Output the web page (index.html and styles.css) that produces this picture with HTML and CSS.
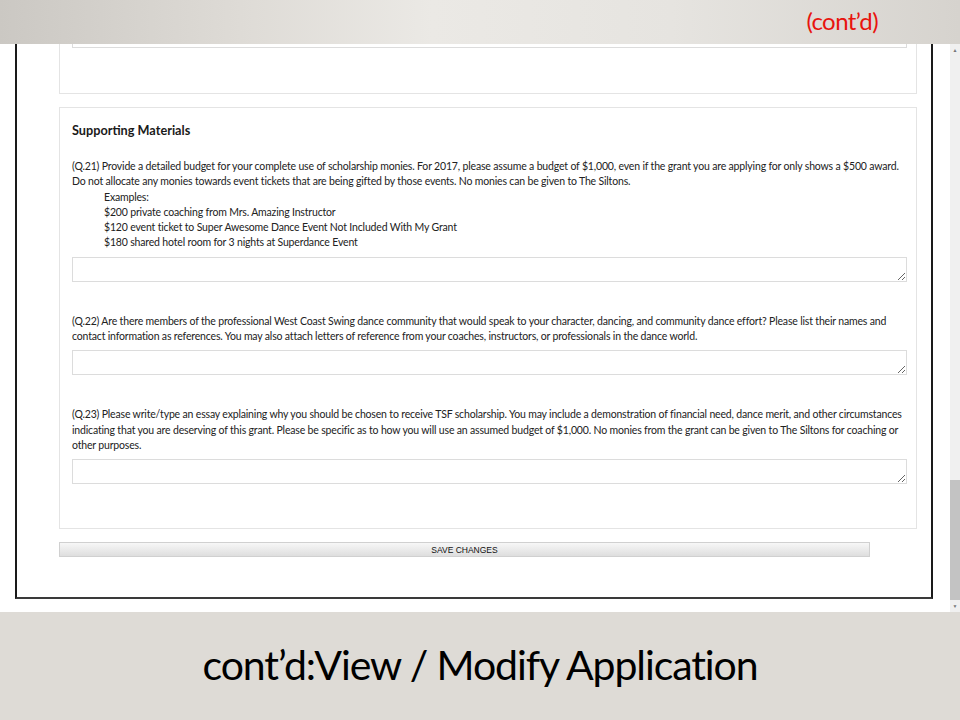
FILE: index.html
```html
<!DOCTYPE html>
<html>
<head>
<meta charset="utf-8">
<link rel="stylesheet" href="styles.css">
</head>
<body>
<div class="slide">
  <header class="topbar">
    <span class="contd">(cont’d)</span>
  </header>
  <section class="shot">
    <div class="window">
      <div class="card prev-card">
        <div class="ta-stub"></div>
      </div>
      <div class="card main-card">
        <h3 class="card-title">Supporting Materials</h3>
        <p class="q">(Q.21) Provide a detailed budget for your complete use of scholarship monies. For 2017, please assume a budget of $1,000, even if the grant you are applying for only shows a $500 award. Do not allocate any monies towards event tickets that are being gifted by those events. No monies can be given to The Siltons.</p>
        <div class="examples">
          <div>Examples:</div>
          <div>$200 private coaching from Mrs. Amazing Instructor</div>
          <div>$120 event ticket to Super Awesome Dance Event Not Included With My Grant</div>
          <div>$180 shared hotel room for 3 nights at Superdance Event</div>
        </div>
        <textarea class="ta"></textarea>
        <p class="q q-gap">(Q.22) Are there members of the professional West Coast Swing dance community that would speak to your character, dancing, and community dance effort? Please list their names and contact information as references. You may also attach letters of reference from your coaches, instructors, or professionals in the dance world.</p>
        <textarea class="ta"></textarea>
        <p class="q q-gap">(Q.23) Please write/type an essay explaining why you should be chosen to receive TSF scholarship. You may include a demonstration of financial need, dance merit, and other circumstances indicating that you are deserving of this grant. Please be specific as to how you will use an assumed budget of $1,000. No monies from the grant can be given to The Siltons for coaching or other purposes.</p>
        <textarea class="ta"></textarea>
      </div>
      <button class="save">SAVE CHANGES</button>
    </div>
    <div class="scrollbar">
      <span class="arrow up">▲</span>
      <div class="track"><div class="thumb"></div></div>
      <span class="arrow down">▼</span>
    </div>
  </section>
  <footer class="caption">
    <h1 class="caption-title">cont’d:View / Modify Application</h1>
  </footer>
</div>
</body>
</html>
```
FILE: styles.css
```css
* { box-sizing: border-box; }
html, body { margin: 0; padding: 0; }
body { width: 960px; height: 720px; overflow: hidden; background: #dedbd6; }

.slide { width: 960px; height: 720px; display: flex; flex-direction: column; }

.topbar {
  height: 44px;
  flex: none;
  background: linear-gradient(to right, #cbc8c3 0%, #dedbd6 25%, #ebe9e5 45%, #e6e4e0 70%, #d6d3ce 100%);
  display: flex;
  justify-content: flex-end;
  align-items: center;
  padding-right: 82px;
}
.contd {
  font-family: Lato, "Open Sans", sans-serif;
  font-size: 24px;
  letter-spacing: -0.6px;
  color: #e8140e;
  line-height: 1;
  margin-top: -2px;
}

.shot {
  height: 568px;
  flex: none;
  background: #fff;
  display: flex;
  overflow: hidden;
}

.window {
  width: 918px;
  margin-left: 15px;
  height: 555px;
  border-left: 2px solid #1a1a1a;
  border-right: 2px solid #1a1a1a;
  border-bottom: 2px solid #3a3a3a;
  padding: 0 0 0 42px;
  font-family: Lato, "Open Sans", sans-serif;
  color: #222;
}

.card {
  width: 858px;
  border: 1px solid #e4e4e4;
  background: #fff;
}
.prev-card {
  border-top: none;
  padding: 0 9px 45px 12px;
}
.ta-stub {
  height: 4px;
  border: 1px solid #dcdcdc;
  border-top: none;
}
.main-card {
  margin-top: 13px;
  padding: 14px 9px 44px 12px;
}
.card-title {
  margin: 0;
  font-size: 12.7px;
  font-weight: 700;
  color: #1a1a1a;
  line-height: 16px;
}
.q {
  margin: 21px 0 0;
  font-size: 10.5px;
  letter-spacing: -0.17px;
  line-height: 15.3px;
}
.q-gap { margin-top: 32px; }
.examples {
  padding-left: 32px;
  font-size: 10.5px;
  letter-spacing: -0.17px;
  line-height: 15.3px;
}
.ta {
  display: block;
  width: 835px;
  height: 25px;
  margin: 6px 0 0;
  border: 1px solid #dcdcdc;
  resize: vertical;
  background: #fff;
  padding: 0;
}

.save {
  display: block;
  margin-top: 13px;
  width: 811px;
  height: 15px;
  padding: 0;
  border: 1px solid #d0d0d0;
  border-radius: 0;
  background: linear-gradient(to bottom, #f7f7f7, #dedede);
  font-family: "Liberation Sans", Arial, sans-serif;
  font-size: 8.5px;
  line-height: 12px;
  color: #111;
  text-align: center;
}

.scrollbar {
  margin-left: 17px;
  width: 10px;
  background: #f0f0f0;
  display: flex;
  flex-direction: column;
  align-items: center;
}
.arrow {
  font-size: 5px;
  color: #777;
  line-height: 10px;
  height: 10px;
}
.arrow.up { margin-top: 2px; }
.track { flex: 1; width: 100%; display: flex; flex-direction: column; justify-content: flex-end; }
.thumb { height: 120px; background: #c3c3c3; margin-bottom: 2px; }

.caption {
  flex: 1;
  background: #dedbd6;
  display: flex;
  justify-content: center;
  align-items: center;
}
.caption-title {
  margin: 0 0 4px;
  font-family: Lato, "Open Sans", sans-serif;
  font-weight: 400;
  font-size: 41px;
  letter-spacing: -1.1px;
  color: #000;
  line-height: 1;
}
```
